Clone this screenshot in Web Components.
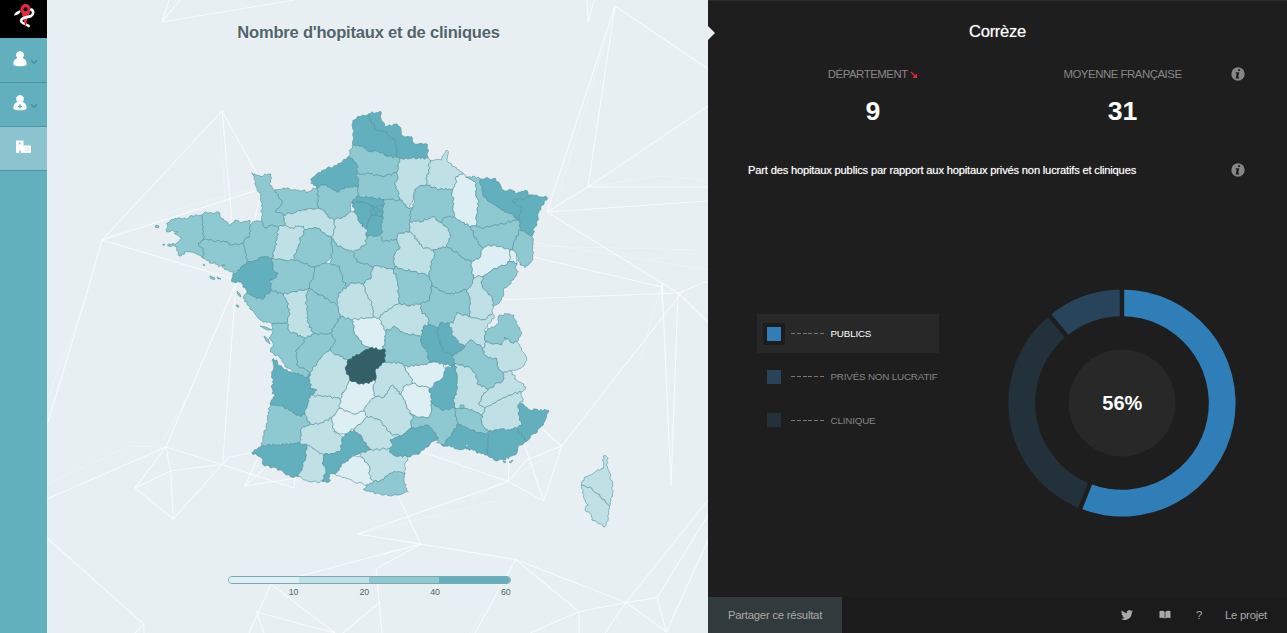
<!DOCTYPE html>
<html lang="fr">
<head>
<meta charset="utf-8">
<title>Nombre d'hopitaux et de cliniques</title>
<style>
html,body{margin:0;height:100%;overflow:hidden}
body{font-family:"Liberation Sans",Arial,sans-serif}
</style>
</head>
<body>
<health-app></health-app>
<script>
const define = (name, html, setup) => {
  const t = document.createElement('template');
  t.innerHTML = html;
  customElements.define(name, class extends HTMLElement {
    connectedCallback() {
      if (this.shadowRoot) return;
      this.attachShadow({mode: 'open'}).append(t.content.cloneNode(true));
      if (setup) setup.call(this, this.shadowRoot);
    }
  });
};

/* ---------- map data: fill class | department | outline rings ---------- */
const DEPTS = `
d|62|352.7,120.7 359,116.5 368.3,114 370.7,120.7 375,125 376.7,130.7 386.7,131.7 389.3,136 395,140 396.7,150 396.7,157.3 386.7,156 378.3,151.7 370,151.7 361.7,146 352.7,144.3
d|59|368.3,114 380,111 382.7,121.7 386,126.7 395,124 400,126.7 402.7,135.7 411.7,136.7 414,143.3 427.3,144.3 428.3,158.3 400,158.3 396.7,157.3 396.7,150 395,140 389.3,136 386.7,131.7 376.7,130.7 375,125 370.7,120.7
c|80|352.7,144.3 361.7,146 370,151.7 378.3,151.7 386.7,156 396.7,157.3 400,158.3 396.7,172.7 383.3,176.7 370,174 357,173.3 357,165 349,156.7 350,152.7
d|76|349,156.7 357,165 357,173.3 358.3,186.7 346.7,187.3 337.3,192.3 333.3,190 326.7,185 316.7,187.3 310.7,183.3 311.7,178.3 321.7,170.7 340,163.3
c|60|357,173.3 370,174 383.3,176.7 396.7,172.7 398.3,178.3 395,185 397.7,190 399.3,200 383.3,199.5 370,197.3 357.3,196 358.3,186.7
b|02|400,158.3 428.3,158.3 430,160 429,171.7 426,178.3 426,185 416.7,188.3 414,195 409.3,209.3 401.7,200 399.3,200 397.7,190 395,185 398.3,178.3 396.7,172.7
b|08|430,160 441.7,160 446.7,150 448.3,151.7 447.3,161.7 454,166.7 463.3,174 456,176.7 456,183.3 452.7,190 440,189.3 426,185 426,178.3 429,171.7
c|51|426,185 440,189.3 452.7,190 452.7,201.7 454,216.7 445,217.3 441.7,222.7 433.3,216.7 421.7,221.7 410,221.7 409.3,215 413.3,206.7 414,195 416.7,188.3
a|55|463.3,174 466,177.3 475,181.7 476,193.3 478.3,200 477.3,213.3 476,226 470,226.7 456,218.3 454,216.7 452.7,201.7 452.7,190 456,183.3 456,176.7
c|54|466,177.3 473,176 480,179 482.7,195 490,201.7 500,208.3 513.3,215 516.7,220 506.7,222.7 496.7,225 483.3,228.3 476,226 477.3,213.3 478.3,200 476,193.3 475,181.7
d|57|480,179 493.3,178.3 498.3,181.7 503.3,190 513.3,190.7 515,193.3 525,190 530,195 523.3,200 515,198.3 512.7,201.7 521.7,208.3 519.3,220.7 516.7,220 513.3,215 500,208.3 490,201.7 482.7,195
d|67|515,198.3 523.3,200 530,195 536.7,195 547.3,197.7 539,211 536.7,223.3 531.7,236.7 520,229.3 519.3,220.7 521.7,208.3 512.7,201.7
c|68|520,229.3 531.7,236.7 533.3,243.3 532.7,260 525,267.7 520,265 516.7,255 512.3,250 515,240
c|88|476,226 483.3,228.3 496.7,225 506.7,222.7 516.7,220 519.3,220.7 520,229.3 515,240 512.3,250 510,250 500,246.7 488.3,245 483.3,248.3 476.7,240 473.3,233.3 470,226.7
c|52|454,216.7 456,218.3 470,226.7 473.3,233.3 476.7,240 483.3,248.3 478.3,259.3 470.7,261 465,260 458.3,253.3 446.7,246.7 450.7,236.7 448.3,228.3 441.7,222.7 445,217.3
b|10|410,221.7 421.7,221.7 433.3,216.7 441.7,222.7 448.3,228.3 450.7,236.7 446.7,246.7 433.3,250 421.7,246.7 413.3,235 410,231.7
b|89|398.3,233.3 410,231.7 413.3,235 421.7,246.7 433.3,250 435,253.3 431.7,263.3 429.3,276 415,271.7 403.3,270 395,266.7 393.3,256.7 400,246.7 396.7,240
c|77|383.3,199.5 399.3,200 401.7,200 409.3,209.3 413.3,206.7 409.3,215 410,221.7 410,231.7 398.3,233.3 396.7,240 383.3,241.7 379.3,235 381.7,233.3 382.7,216.7
d|95|357.3,196 370,197.3 383.3,199.5 383.3,206 373,206 364,202.5 351.7,202.7
d|78|351.7,202.7 364,202.5 373,206 371.7,210 370.7,216.7 366.7,229 360,223.3 355,213.3
d|91|370.7,216.7 376,214.5 382.7,216.7 381.7,233.3 379.3,235 366.7,236.7 366.7,229
d|93|375,207 383.3,206 382.9,213 379,211
d|94|376,214.5 375.5,212 379,211 382.9,213 382.7,216.7
d|92|373,206 375,207 374,210 375.5,212 376,214.5 370.7,216.7 371.7,210
d|75|375,207.5 379,208.5 379,211 375.5,212 374,210
c|45|366.7,236.7 379.3,235 383.3,241.7 396.7,240 400,246.7 393.3,256.7 395,266.7 393.3,269.3 383.3,266.7 373.3,266.7 356.7,261.7 353.3,251.7 365,245
b|28|334,220 343.3,216.7 350,211.7 355,213.3 360,223.3 366.7,229 366.7,236.7 365,245 353.3,251.7 346.7,250 336.7,245 331.7,238.3 335,228.3
c|27|316.7,187.3 326.7,185 333.3,190 337.3,192.3 346.7,187.3 358.3,186.7 357.3,196 351.7,202.7 350,211.7 343.3,216.7 334,220 330,218.3 325,211.7 318.3,208.3 318.3,200
c|14|275,190 283.3,187.7 296.7,190 308.3,191.7 316.7,187.3 318.3,200 318.3,208.3 310,208.3 296.7,211.7 283.3,215 275,211.7 280,206.7 281.7,200 278.3,196.7
c|50|251.7,172.7 260,176 270.7,174 271.7,178.3 269.3,183.3 275,190 278.3,196.7 281.7,200 280,206.7 275,211.7 283.3,215 285,225 278.3,227.3 270,225.5 265,228 261.7,221 261.7,216.7 260.7,196.7 255,183.3
b|61|283.3,215 296.7,211.7 310,208.3 318.3,208.3 325,211.7 330,218.3 334,220 335,228.3 331.7,238.3 325,233.3 318.3,228.3 313.3,228.3 305,230 303.3,226 290,228.3 285,225
b|53|278.3,227.3 285,225 290,228.3 303.3,226 305,230 300,240 296.7,250 293.3,260 283,260 271.7,258.3 275,248.3 276.7,240
c|72|305,230 313.3,228.3 318.3,228.3 325,233.3 331.7,238.3 332.5,246.7 331.7,256.7 325,263.3 315,267.3 303.3,263.3 296.7,260 293.3,260 296.7,250 300,240
c|35|250,226.7 253.3,221.7 261.7,221 265,228 270,225.5 278.3,227.3 276.7,240 275,248.3 271.7,258.3 265,256.7 246.7,263.3 245,250 241.7,243.3 250,235
c|22|201.7,215 205,211.7 212,213 218.3,211.7 220,216.7 230,226 235,220 240,222.7 249.3,220 250,226.7 250,235 241.7,243.3 231.7,245 225,241.7 203.3,240 202.7,233.3
c|29|201.7,215 190,216 186,219 175,218.3 166.7,223.3 166.7,231.7 172,230 178.3,231.7 174,233 181.7,238.3 176.7,243.3 167.3,245 176.7,246.7 179.3,256 186.7,251.7 198.3,255 203.3,258.3 203.3,250 198.3,243.3 203.3,240 202.7,233.3
c|56|198.3,243.3 203.3,240 225,241.7 231.7,245 241.7,243.3 245,250 246.7,263.3 238.3,270 231.7,271.7 222,267 225,265 218.3,266.7 215,261.7 211.7,263.3 203.3,258.3 203.3,250
d|44|246.7,263.3 265,256.7 271.7,258.3 273.3,270 278.3,273.3 276.7,276.7 270,280 271.7,290.7 261.7,299.3 258.3,298.3 246.7,293.3 241.7,281.7 231.7,281.7 233.3,273.3 238.3,270
c|49|271.7,258.3 283,260 293.3,260 296.7,260 303.3,263.3 315,267.3 313.3,276.7 309,288.3 295,291.7 283.3,294 271.7,290.7 270,280 276.7,276.7 278.3,273.3 273.3,270
c|37|315,267.3 325,263.3 330,263.3 340,266.7 342.7,278.3 346.7,286.7 338.3,293.3 336.7,305 320,295 309,288.3 313.3,276.7
c|41|336.7,245 346.7,250 353.3,251.7 356.7,261.7 373.3,266.7 371.7,276.7 363.3,284 350,283.3 346.7,286.7 342.7,278.3 340,266.7 330,263.3 331.7,256.7 332.5,246.7 331.7,238.3
b|18|373.3,266.7 383.3,266.7 393.3,269.3 396,277 398.3,286.7 399.3,303.5 393.3,306 385,311.7 378.3,318.3 373.3,317.3 371.7,303.3 365,291.7 363.3,284 371.7,276.7
b|36|350,283.3 363.3,284 365,291.7 371.7,303.3 373.3,317.3 362,318 351.7,320 340,316.7 336.7,305 338.3,293.3 346.7,286.7
c|58|395,266.7 403.3,270 415,271.7 429.3,276 431.7,286 430,300 420,304 410,306 399.3,303.5 398.3,286.7 396,277 393.3,269.3
c|21|435,253.3 433.3,250 446.7,246.7 458.3,253.3 465,260 470.7,261 473.3,277 470.7,286.7 466.7,290 450,294 431.7,286 429.3,276 431.7,263.3
a|70|470.7,261 478.3,259.3 483.3,248.3 488.3,245 500,246.7 510,250 510,261.7 500,266.7 491.7,270 483.3,276.7 473.3,277
a|90|510,250 512.3,250 516.7,255 517,263.5 510,261.7
c|25|483.3,276.7 491.7,270 500,266.7 510,261.7 517,263.5 515,266.7 518.3,271.7 513.3,280 503.3,290 501.7,300 493.3,306.7 491.7,296.7 484.5,290 481,281.7
b|39|473.3,277 483.3,276.7 481,281.7 484.5,290 491.7,296.7 493.3,306.7 492.5,313.3 485,320 470,316.7 470,300 466.7,290 470.7,286.7
c|71|431.7,286 450,294 466.7,290 470,300 470,316.7 456.7,312.7 453.3,323.3 448.3,322.7 440,323.3 438.3,327.3 428.3,325 427.3,316.7 421.7,311.7 420,304 430,300
b|03|399.3,303.5 410,306 420,304 421.7,311.7 427.3,316.7 428.3,325 423.3,326.7 421.7,336.7 400,331.7 395,326.7 385.5,331 380,320 378.3,318.3 385,311.7 393.3,306
a|23|351.7,320 362,318 373.3,317.3 378.3,318.3 380,320 385.5,331 385,341.7 381.7,350 370,348.3 363.3,345 355,335
c|63|385.5,331 395,326.7 400,331.7 421.7,336.7 421.7,343.3 426.7,350 430,362.7 423.3,365 404,366.5 400,363.3 385,361.7 384.3,349.3 381.7,350 385,341.7
d|42|423.3,326.7 428.3,325 438.3,327.3 438.3,335 443.3,351.7 451.7,355 455,363.3 451.7,366 441.7,363.3 430,362.7 426.7,350 421.7,343.3 421.7,336.7
d|69|438.3,327.3 440,323.3 448.3,322.7 451.7,330 453.3,336.7 465,346.7 455,354 451.7,355 443.3,351.7 438.3,335
b|01|453.3,323.3 456.7,312.7 470,316.7 485,320 492.5,313.3 494,318.3 488.3,323.3 485,331.7 486,342 482.7,348.3 471.7,340 465,346.7 453.3,336.7 451.7,330 448.3,322.7
c|74|485,331.7 498.3,323.3 498.3,316 506.7,314 514,315 516,323.3 521.7,333.3 516.7,341.7 511.7,342.7 505,337.3 501.7,345 492,344 486,342
b|73|482.7,348.3 486,342 492,344 501.7,345 505,337.3 511.7,342.7 516.7,341.7 521.7,348.3 526.7,358.3 521.7,367.3 511,371 503.3,372.7 498.3,369.3 496.7,358.3 488.3,358.3 485,355
c|38|451.7,355 455,354 465,346.7 471.7,340 482.7,348.3 485,355 488.3,358.3 496.7,358.3 498.3,369.3 503.3,372.7 503.3,380 488.3,389.3 478.3,385 475,373.3 466.7,366.7 455,363.3
b|05|503.3,372.7 511,371 516.7,380 526,387.3 521,392 510,395 500,400 485,408.3 478.3,403.3 483.3,395 488.3,389.3 503.3,380
b|04|521,392 523.3,400 518.3,405 518.3,413.3 521.7,423.3 516.7,428.3 498.3,430 488.3,431.7 481.7,423.3 481.7,415 485,408.3 500,400 510,395
b|26|455,363.3 466.7,366.7 475,373.3 478.3,385 488.3,389.3 483.3,395 478.3,403.3 485,408.3 481.7,415 475,411.7 465,408.3 455,408.3 453.3,401.7 457.3,386.7 456.7,373.3
d|07|455,363.3 456.7,373.3 457.3,386.7 453.3,401.7 455,408.3 441.7,410 431.7,403.3 429.3,388.3 443.3,376.7 445,368.3 451.7,366
a|43|404,366.5 423.3,365 430,362.7 441.7,363.3 445,368.3 443.3,376.7 429.3,388.3 420,386.7 413.3,383.3 410,376.7
b|15|385,361.7 400,363.3 404,366.5 410,376.7 413.3,383.3 403.3,386.7 401,395 392.2,385 385,396.7 375,396.7 373.3,386.7 375,380 375,370
a|48|403.3,386.7 413.3,383.3 420,386.7 429.3,388.3 431.7,403.3 430,416.7 420,417.3 410,413.3 405,403 401,395
c|87|340,316.7 351.7,320 355,335 363.3,345 370,348.3 358.3,355 348.3,360 333.3,353.3 330,350 335,340 330.5,333 336.7,322.7
c|86|309,288.3 320,295 336.7,305 340,316.7 336.7,322.7 330.5,333 313.3,334 308.3,323.3 306.7,310 306,296.7
b|79|283.3,294 295,291.7 309,288.3 306,296.7 306.7,310 308.3,323.3 313.3,334 305,338.3 290,331.7 286.7,323.3 290,313.3 286.7,301.7
c|85|243.3,298.3 246.7,293.3 258.3,298.3 261.7,299.3 271.7,290.7 283.3,294 286.7,301.7 290,313.3 286.7,323.3 272,324 260,320 251.7,310
c|17|272,324 286.7,323.3 290,331.7 305,338.3 303.3,343.3 296,351.7 296.7,365 310,373.3 307.3,377.3 295,373.3 285,366.7 280,358.3 270,351.7 273,343 269,338 273,331
c|16|305,338.3 313.3,334 330.5,333 335,340 330,350 325,353.3 316.7,363.3 310,373.3 296.7,365 296,351.7 303.3,343.3
b|24|325,353.3 330,350 333.3,353.3 348.3,360 346,370 350,380 348.3,383.3 340,399 326.7,396.7 310,395.5 316.7,390 310,388.3 310,373.3 316.7,363.3
d|33|273.3,358.3 285,370 295,373.3 307.3,377.3 310,373.3 310,388.3 316.7,390 310,395.5 305,413.3 300,416.7 286.7,408.3 270,403.3 275,396 272,393.3
c|40|270,403.3 286.7,408.3 300,416.7 305,413.3 310,424 301.7,428.3 300,443.3 261.7,446 266.7,423.3
b|47|310,395.5 326.7,396.7 340,399 340,408.3 331.7,418.3 320,423.3 310,424 305,413.3
a|46|350,380 363.3,384 375,380 373.3,386.7 375,396.7 366.7,405 364,411 353.3,414 340,408.3 340,399 348.3,383.3
b|12|375,396.7 385,396.7 392.2,385 401,395 405,403 410,413.3 413.3,416.7 410,429 400,436 391,434 380,420 366.7,416.7 364,411 366.7,405
a|82|331.7,418.3 340,408.3 353.3,414 364,411 366.7,416.7 356.7,426.7 345,434 334,431.7
b|81|356.7,426.7 366.7,416.7 380,420 391,434 400,436 390,440 393.3,444 390,448.3 370,450 366,443 361.7,436.7 354,430
b|32|301.7,428.3 310,424 320,423.3 331.7,418.3 334,431.7 343.3,437 340,451.7 323.3,455 308.3,446.7 300,443.3
d|64|251.7,452.7 261.7,446 300,443.3 306.7,444 306,456.7 298.3,476.7 291.7,477.3 280,470 263.3,465 261.7,458.3
b|65|306.7,444 323.3,455 323.3,465 326,471.7 322.7,481.7 310,481.7 298.3,476.7 306,456.7
d|31|343.3,437 345,434 354,430 361.7,436.7 366,443 370,450 360,453.3 351.7,456.7 343.3,463.3 335,474 329.3,475 329.3,481.7 322.7,481.7 326,471.7 323.3,465 323.3,455 340,451.7
a|09|351.7,456.7 360,456 363.3,458.3 370,466.7 370,478.3 374,481.7 366.7,485 353.3,481.7 335,474 343.3,463.3
b|11|370,450 390,448.3 393.3,455 408.3,456.7 405,463.3 405,473.3 390,473.3 383.3,480 374,481.7 370,478.3 370,466.7 363.3,458.3 360,453.3
c|66|390,473.3 398.3,471.7 405,473.3 405,486.7 408.3,491.7 391.7,496 376.7,493.3 363.3,489.3 366.7,485 374,481.7 383.3,480
d|34|390,440 400,436 410,429 425,425 431.7,428.3 438.3,438.3 430,444 420,453.3 408.3,456.7 393.3,455 389,452 393.3,444
c|30|410,413.3 420,417.3 430,416.7 431.7,403.3 441.7,410 455,408.3 458.3,423.3 451.7,435 441.7,445 436.7,443 438.3,438.3 431.7,428.3 425,425 410,429 413.3,416.7
c|84|455,408.3 465,408.3 475,411.7 481.7,415 481.7,423.3 488.3,431.7 485,434 470,430 458.3,423.3
d|13|458.3,423.3 470,430 485,434 488.3,435 487.3,455 477,453.3 475,450 466,449 468,444 462,449.5 441.7,445 451.7,435
d|83|488.3,431.7 498.3,430 516.7,428.3 523.3,436.7 526,441.7 518.3,446.7 516.7,453.3 503.3,460 495,460.7 487.3,455 488.3,435
d|06|518.3,405 522.5,403.3 530,410 548.3,410 543.3,425 530,438.3 526,441.7 523.3,436.7 516.7,428.3 521.7,423.3 518.3,413.3
b|2B|603.3,456 606.7,456.7 608.3,470 612.7,483.3 612.7,495 609.3,506 600,496.7 591.7,488.3 581.7,485 585,476.7 603.3,468.3
b|2A|581.7,485 591.7,488.3 600,496.7 609.3,506 608.3,518.3 605,526.7 591.7,520 591.7,515 585,510 588.3,505 583.3,496.7
e|19|370,348.3 381.7,350 384.3,349.3 385,361.7 375,370 375,380 363.3,384 350,380 346,370 348.3,360 358.3,355`;

const ISLES = 'M156 225l3 1-1 2-3-1zM163 244l2 .5-2 1zM210 276l5 2-1 2-4-2zM203 264l2 1-1 1zM217 277l4 2-3 0zM237 291l3 3 1 3-3-2zM236 305l2 0 1 2-2 0zM260 326l6 1 6 3-5 0zM264 336l4 3 2 5-4-3zM503 461l3 1-2 1zM509 462l4-2-2 3zM460 405l4 0 0 3-4 0z';

/* background constellation */
const NET = `162,22 169,0|162,22 180,0|162,22 295,0|222,111 102,240|222,111 232,222|222,111 257,174|102,240 257,190|102,240 236,280|102,240 84,303 47,425|260,197 254,222|236,283 222.7,464|236,283 166,447|166,447 47,499|166,447 222,464.5|166,447 135,488 173.3,519 222,464.5|166,447 170.5,471 173.3,519|135,488 170.5,471 222,464.5|222,464.5 294,488 295,478|222,464.5 229,457 252,452.7|259,456 244.7,486 297,478|244.7,486 267,466|47,538 143.7,624 135,633|143.7,624 144,633|508.5,481.5 357.7,534 420.7,544 396.7,493|420.7,544 515.5,559.5 579,611.7 530,633|420.7,544 300,576|420.7,544 376,569 382,633|515.5,559.5 626,602.5 657,597.7 666.5,632 626,602.5|515.5,559.5 475,633|579,611.7 579,633|579,611.7 626,602.5 708,500|626,602.5 605,633|657,597.7 708,515|666.5,632 708,540|249,633 271,584 335,633|264,633 256.5,612 335,633|380,602 343,633|508.5,481.5 422,452|508.5,481.5 526.7,460 561.7,446 543.5,501 508.5,481.5 509,458|543.5,501 523,440|561.7,446 543,430|561.7,446 683,291|615,6 547,212|615,6 588,187|615,6 708,69|587,0 588,22 594,0|547,212 588,187 708,106|588,187 708,187|547,212 708,201|547,212 678,293 708,281|533,257 662,287|678,293 496,300|662,283 671,486 678,293|662,283 662,305|678,293 708,322`;
const NET_FAINT = `220,115 226,220|102,240 190,205 257,188|84,303 47,400|166,447 130,446 47,484|185,400 163,440|533,242 708,270|533,246 700,250|357.7,534 500,500|380,555 415,546|615,10 560,190|588,187 660,176 708,180|662,283 640,360|470,633 490,600|560,450 470,500|588,22 590,0`;

const W = 661, H = 633, X0 = 47;

/* The outline points are shared by neighbours, so each border is roughened
   from a seed of its two ends: both sides get the same line. */
function buildMap() {
  const depts = DEPTS.trim().split('\n').map(l => {
    const [k, id, pts] = l.split('|');
    return {k, id, p: pts.split(' ').map(s => s.split(',').map(Number))};
  });
  const verts = [];
  const snap = q => {
    for (const v of verts) if (Math.hypot(v[0] - q[0], v[1] - q[1]) < 1.1) return v;
    verts.push(q); return q;
  };
  depts.forEach(d => d.p = d.p.map(snap));
  const rough = (a, b) => {
    const flip = a[0] > b[0] || (a[0] === b[0] && a[1] > b[1]);
    const [s, e] = flip ? [b, a] : [a, b];
    let seed = Math.floor(s[0] * 131 + s[1] * 977 + e[0] * 313 + e[1] * 71) % 2147483647;
    const rnd = () => (seed = seed * 48271 % 2147483647) / 2147483647 - .5;
    for (let i = 0; i < 3; i++) rnd();
    const len = Math.hypot(e[0] - s[0], e[1] - s[1]), n = Math.max(1, Math.round(len / 1.9));
    const out = [];
    for (let i = 1; i < n; i++) {
      const t = i / n, o = rnd() * 2.4;
      out.push([s[0] + (e[0] - s[0]) * t - (e[1] - s[1]) / len * o, s[1] + (e[1] - s[1]) * t + (e[0] - s[0]) / len * o]);
    }
    return flip ? out.reverse() : out;
  };
  return depts.map(d => {
    const pts = [];
    d.p.forEach((a, i) => {
      const b = d.p[(i + 1) % d.p.length];
      if (a === b) return;
      const dx = b[0] - a[0], dy = b[1] - a[1], L = dx * dx + dy * dy, mids = [];
      for (const v of verts) {
        if (v === a || v === b) continue;
        const t = ((v[0] - a[0]) * dx + (v[1] - a[1]) * dy) / L;
        if (t > .05 && t < .95 && Math.abs((v[0] - a[0]) * dy - (v[1] - a[1]) * dx) / Math.sqrt(L) < 1) mids.push([t, v]);
      }
      mids.sort((m, n) => m[0] - n[0]);
      const chain = [a, ...mids.map(m => m[1]), b];
      for (let j = 0; j + 1 < chain.length; j++) pts.push(chain[j], ...rough(chain[j], chain[j + 1]));
    });
    return {k: d.k, id: d.id, d: 'M' + pts.map(q => q[0].toFixed(1) + ' ' + q[1].toFixed(1)).join('L') + 'Z'};
  });
}

define('france-map', `<style>
:host{display:block;min-width:0}
svg{display:block}
.net{fill:none;stroke:#fff;stroke-opacity:.7;stroke-width:1.1}
.faint{stroke-opacity:.28}
.a{fill:#ddeff2}.b{fill:#bfe0e4}.c{fill:#8ec9d1}.d{fill:#62b0be}.e{fill:#335f68}
.dept{stroke:#54909a;stroke-opacity:.75;stroke-width:.8;stroke-linejoin:round}
.dept.e{stroke:#335f68;stroke-width:1.4}
</style><svg width="${W}" height="${H}" viewBox="${X0} 0 ${W} ${H}"></svg>`, root => {
  const line = cls => s => `<polyline class="net ${cls}" points="${s}"/>`;
  root.querySelector('svg').innerHTML =
    NET_FAINT.split('|').map(line('faint')).join('') + NET.split('|').map(line('')).join('') +
    buildMap().map(x => `<path class="dept ${x.k}" d="${x.d}"/>`).join('') +
    `<path class="dept c" d="${ISLES}"/>`;
});

define('scale-legend', `<style>
:host{display:block;width:283px}
.bar{display:grid;grid-template-columns:repeat(4,1fr);height:8px;box-sizing:border-box;border:1px solid #7ba9b2;border-radius:4px;overflow:hidden}
.bar i:nth-child(1){background:#ddeff2}.bar i:nth-child(2){background:#bfe0e4}.bar i:nth-child(3){background:#8ec9d1}.bar i:nth-child(4){background:#62b0be}
.n{display:grid;grid-template-columns:repeat(4,1fr);font-size:8.8px;letter-spacing:-.2px;line-height:10px;padding-top:3px;color:#52666c;text-align:right}
</style><div class="bar"><i></i><i></i><i></i><i></i></div><div class="n"><span>10</span><span>20</span><span>40</span><span>60</span></div>`);

define('map-view', `<style>
:host{display:grid;width:661px;height:633px;background:#e7eff3;overflow:hidden}
france-map,.over{grid-area:1/1}
.over{display:flex;flex-direction:column;align-items:center;justify-content:space-between;padding:22px 0 36px;box-sizing:border-box;z-index:1}
h1{margin:0 18px 0 0;font-size:16.5px;letter-spacing:-.2px;line-height:20px;color:#50646c;text-shadow:0 1px 0 #fff}
scale-legend{margin-right:17px}
</style><france-map></france-map><div class="over"><h1>Nombre d'hopitaux et de cliniques</h1><scale-legend></scale-legend></div>`);

define('nav-item', `<style>
:host{display:flex;height:44px;box-sizing:border-box;border-bottom:1px solid #4d93a0;align-items:center;padding:0 8px 3px 12px;gap:2px}
:host([active]){background:#8bc4cf;padding:0 0 3px 14px}
.chev{margin-top:6px;flex:none}
:host([active]) .chev{display:none}
</style><slot></slot><svg class="chev" width="8" height="6" viewBox="0 0 8 6"><path d="M1 1.300 4 4.300 7 1.300" fill="none" stroke="#4a8f9c" stroke-width="1.500"/></svg>`);

define('side-nav', `<style>
:host{display:flex;flex-direction:column;width:47px;height:633px;background:#62b0be}
.logo{height:38px;background:#000;display:flex;justify-content:center}
.first{height:45px}
svg{display:block;flex:none}
</style>
<div class="logo"><svg width="47" height="38" viewBox="0 0 47 38">
<path d="M25.600 4a5.100 5.100 0 0 0-5.100 5.100c0 3.400 2.300 6.400 3 10l1.900 8.200 1.500-7.300c.7-4 3.800-7 3.800-10.900A5.100 5.100 0 0 0 25.600 4z" fill="#e02b3c"/>
<circle cx="25.600" cy="9.200" r="2" fill="#000"/>
<path d="M13.900 15.300c1-2.900 3.300-4.500 6.400-5.100.6 1.900-.6 3.300-2.200 4-1.400.8-2.700 1.500-4.200 1.100z" fill="#fff"/>
<path d="M31.300 9.500c2.800 1.500 2.300 5-.3 6.500-3 1.600-9.300.9-9.900 4.500-.4 3.300 4.600 2.900 7.600 5.500" fill="none" stroke="#fff" stroke-width="2.600" stroke-linecap="round"/>
<path d="M24.300 21.800l1.300 5.500 1-4.800z" fill="#e02b3c"/>
</svg></div>
<nav-item class="first" style="height:45px"><svg width="16" height="16" viewBox="0 0 16 16"><path fill="#fff" d="M8 0a4 4 0 0 1 2.600 7C13.500 8 15 10.600 14.600 13.800 13 15.800 3 15.800 1.400 13.800 1 10.600 2.500 8 5.400 7A4 4 0 0 1 8 0z"/></svg></nav-item>
<nav-item><svg width="16" height="16" viewBox="0 0 16 16"><path fill="#fff" d="M8 0a4 4 0 0 1 2.600 7C13.500 8 15 10.600 14.600 13.800 13 15.800 3 15.800 1.400 13.800 1 10.600 2.500 8 5.400 7A4 4 0 0 1 8 0z"/><path d="M8 9.300v4M6 11.300h4" stroke="#62b0be" stroke-width="1.300"/></svg></nav-item>
<nav-item active><svg width="18" height="14" viewBox="0 0 18 14"><path fill="#fff" d="M2 .5h7.500v5H17V13H2z"/><path fill="#8bc4cf" d="M5 2.600h1.600v1.600H5zM5 10.800h1.700V13H5zM11.300 7.500h1v1h-1zM13.400 7.500h1v1h-1zM11.300 9.800h1v1h-1zM13.400 9.800h1v1h-1z"/></svg></nav-item>`);

define('info-icon', `<style>
:host{display:block;width:14px;height:14px}
svg{display:block}
</style><svg width="14" height="14" viewBox="0 0 14 14"><circle cx="7" cy="7" r="6.700" fill="#868686"/><path d="M7.300 2.300h1.900l-.4 1.800H6.900zM5 5.300h3.300L7.200 10.300h1l-.3 1.100H4.600l1-5H4.700z" fill="#1e1e1e"/></svg>`);

define('stat-card', `<style>
:host{display:flex;flex-direction:column;align-items:center}
.l{font-size:11.4px;letter-spacing:-.46px;line-height:14px;color:#888;white-space:nowrap}
.v{font-size:26.67px;line-height:32px;font-weight:700;color:#fff;margin-top:14px}
</style><div class="l"><slot name="label"></slot></div><div class="v"><slot></slot></div>`);

define('legend-item', `<style>
:host{display:flex;align-items:center;height:39px;padding:1px 0 0 6px;font-size:9.8px;letter-spacing:-.17px;color:#858585;width:182px;box-sizing:border-box;white-space:nowrap}
:host([active]){background:#282828;color:#fff}
.box{padding:4px;margin-right:6px}
:host([active]) .box{background:#1c1c1c}
.sw{width:14px;height:14px;background:var(--swatch)}
.dash{width:33px;height:1px;margin-right:6.500px;background:repeating-linear-gradient(90deg,#777 0 4px,transparent 4px 5.75px)}
</style><div class="box"><div class="sw"></div></div><div class="dash"></div><slot></slot>`);

define('donut-chart', `<style>
:host{display:grid;width:228px;height:228px;place-items:center}
svg,span{grid-area:1/1}
span{font-size:20px;font-weight:700;color:#fff;z-index:1;margin-top:1px}
</style><svg width="228" height="228" viewBox="-114 -114 228 228"></svg><span><slot></slot></span>`, function (root) {
  const vals = this.getAttribute('values').split(',').map(Number), cols = this.getAttribute('colors').split(',');
  const pt = (r, v) => { const a = v / 100 * 2 * Math.PI; return `${(r * Math.sin(a)).toFixed(2)} ${(-r * Math.cos(a)).toFixed(2)}`; };
  let at = 0, arcs = '', cuts = '';
  vals.forEach((v, i) => {
    const to = at + v, big = v > 50 ? 1 : 0;
    arcs += `<path fill="${cols[i]}" d="M${pt(113.6, at)}A113.6 113.6 0 ${big} 1 ${pt(113.6, to)}L${pt(86.8, to)}A86.800 86.800 0 ${big} 0 ${pt(86.8, at)}Z"/>`;
    cuts += `<path stroke="#1e1e1e" stroke-width="4.400" d="M${pt(80, at)}L${pt(116, at)}"/>`;
    at = to;
  });
  root.querySelector('svg').innerHTML = arcs + cuts + '<circle r="53.500" fill="#282828"/>';
});

define('page-footer', `<style>
:host{display:flex;height:36px;background:#1b1b1b;color:#aaa;font-size:11.3px;letter-spacing:-.22px;align-items:center}
.share{width:134px;height:36px;line-height:37px;text-align:center;background:#313a3c}
.links{margin-left:auto;display:flex;align-items:center;padding-right:20px;white-space:nowrap}
svg{display:block}
.q{margin:0 23px 0 25px}
.b{margin-left:26px}
</style><div class="share">Partager ce résultat</div><div class="links">
<svg width="12" height="12" viewBox="0 0 24 24"><path fill="#aaa" d="M24 4.600a10 10 0 0 1-2.800.8 5 5 0 0 0 2.100-2.700 10 10 0 0 1-3.100 1.200 4.900 4.900 0 0 0-8.400 4.500A14 14 0 0 1 1.700 3.200a4.900 4.900 0 0 0 1.500 6.500 5 5 0 0 1-2.200-.6 4.900 4.900 0 0 0 3.900 4.900 5 5 0 0 1-2.200.1 4.900 4.900 0 0 0 4.600 3.400A10 10 0 0 1 0 19.500a14 14 0 0 0 21.500-12.400A10 10 0 0 0 24 4.600z"/></svg>
<svg class="b" width="12" height="10" viewBox="0 0 12 10"><path fill="#aaa" d="M.5 1.300C2.500.5 4.500.7 5.700 1.700v6.800C4.400 7.600 2.500 7.500.5 8.200zM11.500 1.300C9.500.5 7.500.7 6.300 1.700v6.800c1.300-.9 3.200-1 5.200-.3z"/><path d="M6 2v6.500" stroke="#666" stroke-width=".6"/></svg>
<span class="q">?</span><span>Le projet</span></div>`);

define('detail-panel', `<style>
:host{display:flex;flex-direction:column;width:579px;height:633px;background:#1e1e1e;color:#fff;position:relative;box-shadow:inset 0 1px 0 #2a2a2a}
.notch{position:absolute;left:0;top:26px;border:solid transparent;border-width:7.500px 0 7.500px 7px;border-left-color:#e7eff3}
h2{margin:22px 0 0;font-weight:400;font-size:16.6px;letter-spacing:-.3px;line-height:20px;text-align:center;text-shadow:0 0 1px #fff8}
.stats{display:grid;grid-template-columns:250px 249px 1fr;margin:25px 0 0 40px}
info-icon{margin-left:-16px}
.row{display:flex;justify-content:space-between;align-items:center;margin:36px 42px 0 40px;font-size:11.2px;letter-spacing:-.2px;line-height:14px;text-shadow:0 0 1px #fff8}
.row info-icon{margin:0}
.chart{flex:1;display:flex;align-items:flex-start}
.lg{display:flex;flex-direction:column;gap:4.300px;margin:136.500px 0 0 49px}
donut-chart{margin:111.500px 0 0 69.300px}
svg{vertical-align:-1px}
</style><div class="notch"></div>
<h2>Corrèze</h2>
<div class="stats">
<stat-card><span slot="label">DÉPARTEMENT <svg width="8" height="8" viewBox="0 0 8 8"><path d="M1 1l4.500 4.500" stroke="#e8283c" stroke-width="1.300"/><path d="M7 2.500V7H2.500z" fill="#e8283c"/></svg></span>9</stat-card>
<stat-card><span slot="label">MOYENNE FRANÇAISE</span>31</stat-card>
<info-icon></info-icon>
</div>
<div class="row"><span>Part des hopitaux publics par rapport aux hopitaux privés non lucratifs et cliniques</span><info-icon></info-icon></div>
<div class="chart">
<div class="lg">
<legend-item active style="--swatch:#307eb8">PUBLICS</legend-item>
<legend-item style="--swatch:#27445b">PRIVÉS NON LUCRATIF</legend-item>
<legend-item style="--swatch:#23313b">CLINIQUE</legend-item>
</div>
<donut-chart values="56,33,11" colors="#307eb8,#23313b,#27445b">56%</donut-chart>
</div>
<page-footer></page-footer>`);

define('health-app', `<style>:host{display:flex;width:1287px;height:633px;overflow:hidden}</style><side-nav></side-nav><map-view></map-view><detail-panel></detail-panel>`);
</script>
</body>
</html>
